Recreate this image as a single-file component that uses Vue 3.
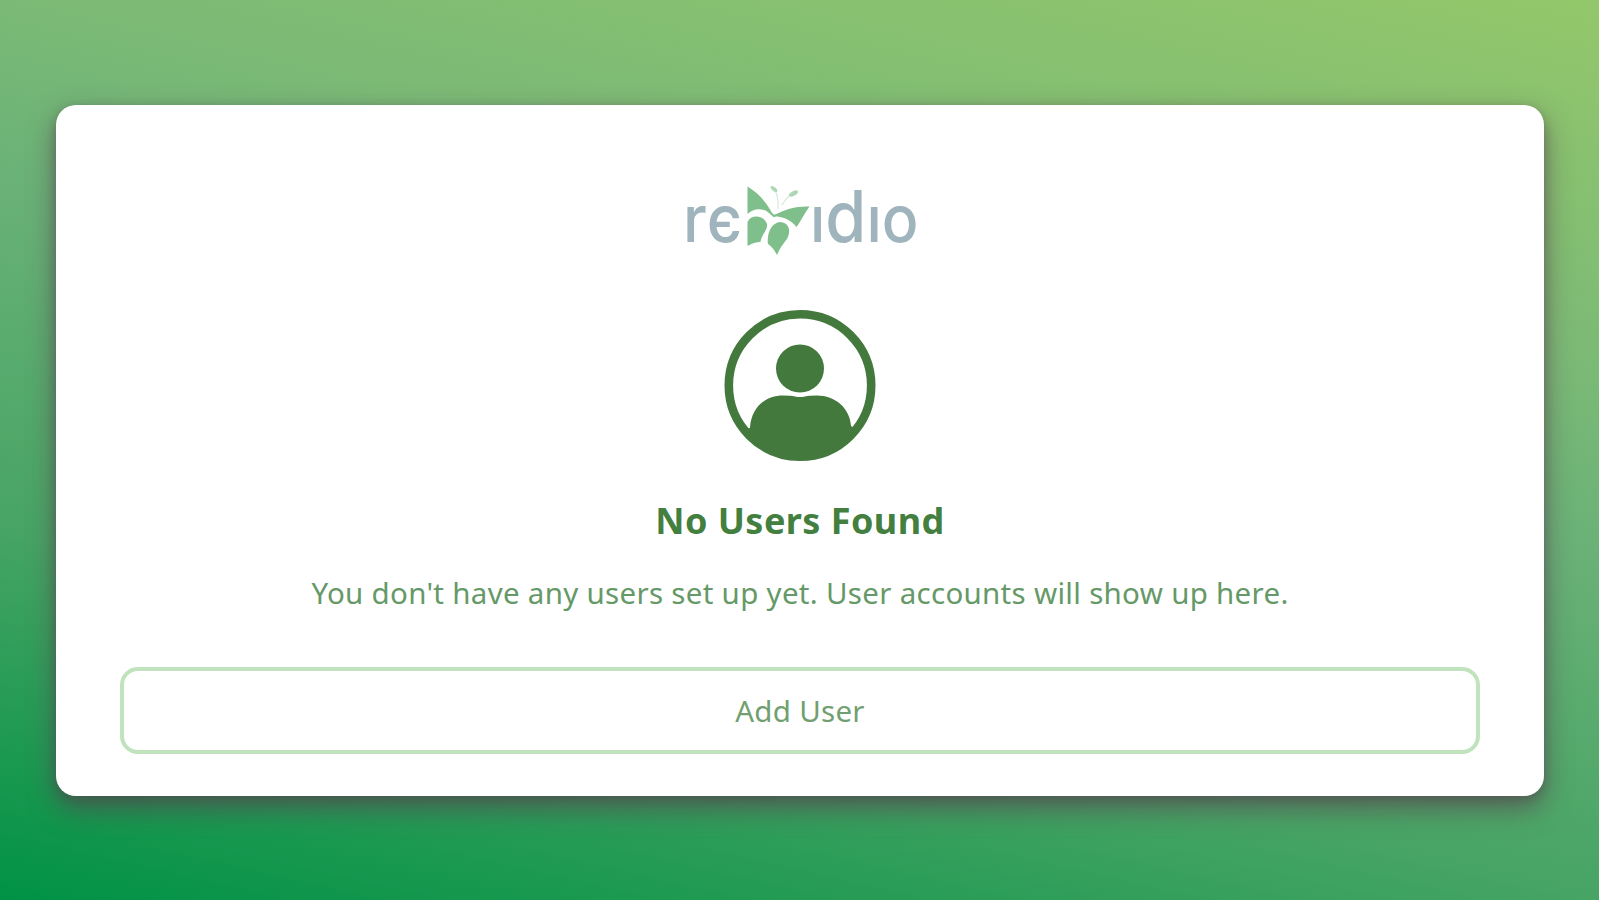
<script setup>
const title = 'No Users Found'
const message = "You don't have any users set up yet. User accounts will show up here."
</script>

<template>
  <main class="page">
    <section class="card">
      <svg class="logo" viewBox="0 0 240 84" role="img" aria-label="remidio">
        <g class="wordmark">
          <text x="2" y="64" textLength="59" lengthAdjust="spacingAndGlyphs">rє</text>
          <text x="129" y="64" textLength="108.500" lengthAdjust="spacingAndGlyphs">ı<tspan class="tall">d</tspan>ıo</text>
        </g>
        <g class="butterfly">
          <path d="M66.500 8.500C77 15 86 24 92 37C82 29 73 30 66.500 36Z" />
          <path d="M128.500 28.500C123 36 120 43 115.500 49C110 42 103 39 93 38C103 31 116 28 128.500 28.500Z" />
          <path d="M66.500 68V44C70 36 83 37 86 46C87 52 80 57 79.500 64Q73 64 66.500 68Z" />
          <path d="M87 66C86 57 89 45 99.500 44C109 45 110 54 106 61C102 66 99 70 96 77C93 71 91 69 87 66Z" />
          <path class="vein" d="M86 32L93 38L106 33" />
          <path class="antenna" d="M97 31Q98 18 93 11M101 27Q106 18 114 14" />
          <g class="tips">
            <ellipse cx="93" cy="11" rx="4" ry="1.800" transform="rotate(38 93 11)" />
            <ellipse cx="112.500" cy="15.500" rx="5" ry="2.200" transform="rotate(-28 112.500 15.500)" />
          </g>
        </g>
      </svg>
      <svg class="avatar" viewBox="0 0 152 152" aria-hidden="true">
        <circle class="ring" cx="76" cy="75.500" r="71.200" />
        <circle cx="76" cy="58.500" r="24" />
        <path d="M26 118C27 98 41 85.500 59 85.500Q67 85.500 71 86.500Q76 87.500 81 86.500Q85 85.500 93 85.500C111 85.500 126 98 127 116L132 119A71 71 0 0 1 20 119Z" />
      </svg>
      <h1 class="title">{{ title }}</h1>
      <p class="message">{{ message }}</p>
      <button class="add" type="button">Add User</button>
    </section>
  </main>
</template>

<style>
body { margin: 0; }
</style>

<style scoped>
.page {
  box-sizing: border-box;
  width: 100vw;
  height: 100vh;
  padding: 104.5px 55px 104px 56px;
  overflow: hidden;
  background: linear-gradient(13deg, #009245 0%, #46a464 29%, #69b177 56%, #7bba76 71%, #93c76a 100%);
  font-family: "Noto Sans", "Open Sans", sans-serif;
}
.card {
  box-sizing: border-box;
  display: flex;
  flex-direction: column;
  align-items: center;
  height: 691.5px;
  padding: 73.5px 64px 0;
  border-radius: 20px;
  background: #fff;
  box-shadow: 0 12px 28px rgba(90, 65, 80, 0.7), 0 3px 8px rgba(60, 55, 65, 0.3);
}
.logo { width: 240px; height: 84px; flex: none; margin-left: 1px; overflow: visible; }
.wordmark {
  fill: #9fb4bd;
  font-family: Inter, sans-serif;
  font-size: 65px;
  font-weight: 500;
}
.tall { font-size: 71px; }
.butterfly { fill: #7fbf8b; }
.vein { fill: none; stroke: #7fbf8b; stroke-width: 2; }
.antenna { fill: none; stroke: #d3e8d6; stroke-width: 1.2; }
.tips { fill: #add6b4; }
.avatar { width: 152px; height: 152px; flex: none; margin-top: 48px; fill: #43793c; }
.ring { fill: none; stroke: #43793c; stroke-width: 8.6; }
.title {
  margin: 34px 0 0;
  color: #43803f;
  font-size: 36px;
  line-height: 50px;
  font-weight: 700;
  letter-spacing: 0.45px;
  white-space: nowrap;
}
.message {
  margin: 27px 0 0;
  color: #659967;
  font-size: 29.5px;
  line-height: 40px;
  letter-spacing: 0.3px;
  white-space: nowrap;
}
.add {
  box-sizing: border-box;
  width: 1360px;
  height: 87px;
  margin-top: 54px;
  padding: 0;
  border: 4px solid #c0e3bd;
  border-radius: 18px;
  background: #fff;
  color: #719f72;
  font: 400 29.5px "Noto Sans", "Open Sans", sans-serif;
  letter-spacing: 0.3px;
}
</style>
